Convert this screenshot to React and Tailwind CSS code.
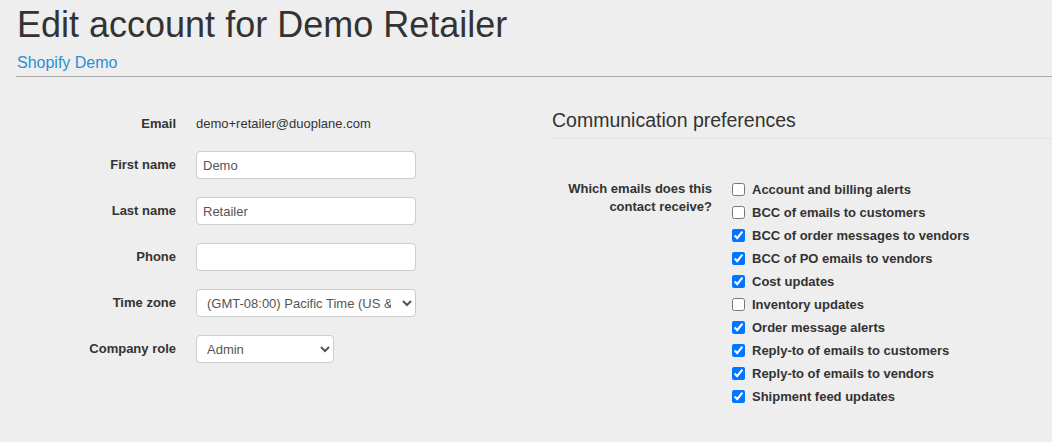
import React from 'react';

const emailOptions = [
    { label: 'Account and billing alerts', checked: false },
    { label: 'BCC of emails to customers', checked: false },
    { label: 'BCC of order messages to vendors', checked: true },
    { label: 'BCC of PO emails to vendors', checked: true },
    { label: 'Cost updates', checked: true },
    { label: 'Inventory updates', checked: false },
    { label: 'Order message alerts', checked: true },
    { label: 'Reply-to of emails to customers', checked: true },
    { label: 'Reply-to of emails to vendors', checked: true },
    { label: 'Shipment feed updates', checked: true },
];

const FieldRow = ({ label, children }) => (
    <div className="flex items-center">
        <label className="w-[160px] shrink-0 text-right font-bold">{label}</label>
        <div className="ml-[20px]">{children}</div>
    </div>
);

const inputClass = 'h-[28px] bg-white border border-[#cccccc] rounded-[4px] text-[#555] text-[13px] outline-none';

const App = () => {
    return (
        <div className="min-h-screen bg-[#eeeeee] font-['Liberation_Sans',Arial,sans-serif] text-[13px] text-[#333]">
            {/* Page header */}
            <div className="pl-4">
                <h1 className="pt-[5px] pl-[1px] text-[36px] leading-[40px] text-[#333]">
                    Edit account for Demo Retailer
                </h1>
                <a href="#" className="block mt-[8px] pl-[1px] text-[16px] leading-[20px] text-[#2b8fd6]">
                    Shopify Demo
                </a>
                <hr className="mt-[3px] border-0 border-t border-[#aaaaaa]" />
            </div>

            <div className="flex">
                {/* Account details */}
                <div className="w-[552px] shrink-0 pl-4 pt-[37px]">
                    <div className="flex leading-[20px]">
                        <span className="w-[160px] shrink-0 text-right font-bold">Email</span>
                        <span className="ml-[20px]">demo+retailer@duoplane.com</span>
                    </div>
                    <div className="mt-[17px] flex flex-col gap-[18px]">
                        <FieldRow label="First name">
                            <input className={`${inputClass} w-[220px] px-[6px]`} defaultValue="Demo" />
                        </FieldRow>
                        <FieldRow label="Last name">
                            <input className={`${inputClass} w-[220px] px-[6px]`} defaultValue="Retailer" />
                        </FieldRow>
                        <FieldRow label="Phone">
                            <input className={`${inputClass} w-[220px] px-[6px]`} defaultValue="" />
                        </FieldRow>
                        <FieldRow label="Time zone">
                            <select className={`${inputClass} w-[220px] pl-[6px] pr-[8px]`} defaultValue="pt">
                                <option value="pt">(GMT-08:00) Pacific Time (US &amp; Canada)</option>
                            </select>
                        </FieldRow>
                        <FieldRow label="Company role">
                            <select className={`${inputClass} w-[138px] pl-[6px]`} defaultValue="admin">
                                <option value="admin">Admin</option>
                            </select>
                        </FieldRow>
                    </div>
                </div>

                {/* Communication preferences */}
                <div className="flex-1 pt-[31px]">
                    <h2 className="pb-[6px] text-[19.5px] leading-[24px] border-b border-[#e3e3e3]">
                        Communication preferences
                    </h2>
                    <div className="mt-[39px] flex">
                        <div className="w-[160px] shrink-0 text-right font-bold leading-[18px] pt-[2px]">
                            Which emails does this contact receive?
                        </div>
                        <div className="ml-[20px] flex flex-col">
                            {emailOptions.map(opt => (
                                <label key={opt.label} className="flex items-center h-[23px] font-bold">
                                    <input type="checkbox" defaultChecked={opt.checked} className="m-0 w-[13px] h-[13px]" />
                                    <span className="ml-[7px]">{opt.label}</span>
                                </label>
                            ))}
                        </div>
                    </div>
                </div>
            </div>
        </div>
    );
};

export default App;
